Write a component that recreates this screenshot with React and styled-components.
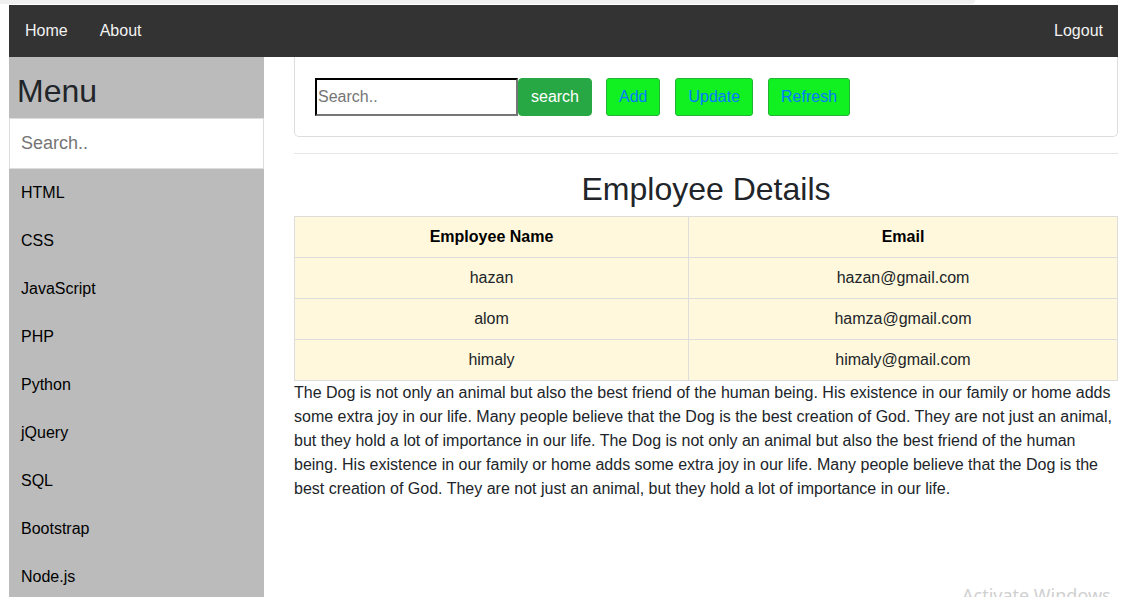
import React from 'react'
import styled, { createGlobalStyle } from 'styled-components'

const GlobalStyle = createGlobalStyle`
  html, body {
    margin: 0;
    padding: 0;
    background: #fff;
    font-family: "Liberation Sans", Arial, sans-serif;
    color: #212529;
    overflow: hidden;
  }
  * { box-sizing: border-box; }
`

const menuItems = ['HTML', 'CSS', 'JavaScript', 'PHP', 'Python', 'jQuery', 'SQL', 'Bootstrap', 'Node.js']

const employees = [
  { name: 'hazan', email: 'hazan@gmail.com' },
  { name: 'alom', email: 'hamza@gmail.com' },
  { name: 'himaly', email: 'himaly@gmail.com' },
]

const dogText =
  'The Dog is not only an animal but also the best friend of the human being. His existence in our family or home adds some extra joy in our life. Many people believe that the Dog is the best creation of God. They are not just an animal, but they hold a lot of importance in our life.'

export default function App() {
  return (
    <>
      <GlobalStyle />
      <Chrome />
      <Page>
        <TopNav>
          <NavLink>Home</NavLink>
          <NavLink>About</NavLink>
          <NavSpacer />
          <NavLink>Logout</NavLink>
        </TopNav>
        <Body>
          <Sidebar>
            <MenuTitle>Menu</MenuTitle>
            <MenuSearch placeholder="Search.." />
            <MenuList>
              {menuItems.map((item) => (
                <MenuItem key={item}>{item}</MenuItem>
              ))}
            </MenuList>
          </Sidebar>
          <Main>
            <ToolCard>
              <SearchInput placeholder="Search.." />
              <SearchButton>search</SearchButton>
              <ActionButton>Add</ActionButton>
              <ActionButton>Update</ActionButton>
              <ActionButton>Refresh</ActionButton>
            </ToolCard>
            <Divider />
            <Title>Employee Details</Title>
            <Table>
              <thead>
                <tr>
                  <Th style={{ width: 394 }}>Employee Name</Th>
                  <Th>Email</Th>
                </tr>
              </thead>
              <tbody>
                {employees.map((e) => (
                  <tr key={e.name}>
                    <Td>{e.name}</Td>
                    <Td>{e.email}</Td>
                  </tr>
                ))}
              </tbody>
            </Table>
            <Paragraph>
              {dogText} {dogText}
            </Paragraph>
          </Main>
        </Body>
      </Page>
      <Watermark>Activate Windows</Watermark>
    </>
  )
}

const Chrome = styled.div`
  height: 5px;
  width: 975px;
  background: #f0f0f0;
  border-bottom: 1px solid #fff;
  border-bottom-right-radius: 4px;
`

const Page = styled.div`
  margin-left: 9px;
  width: 1109px;
`

const TopNav = styled.nav`
  display: flex;
  align-items: center;
  height: 52px;
  background: #333;
`

const NavLink = styled.a`
  color: #f2f2f2;
  font-size: 16px;
  padding: 14px 16px;
  cursor: pointer;
  &:last-child {
    padding-right: 15px;
  }
`

const NavSpacer = styled.div`
  flex: 1;
`

const Body = styled.div`
  display: flex;
  gap: 30px;
  height: 540px;
`

const Sidebar = styled.aside`
  width: 255px;
  flex-shrink: 0;
  background: #bbb;
  display: flex;
  flex-direction: column;
  overflow: hidden;
`

const MenuTitle = styled.h2`
  margin: 0;
  flex-shrink: 0;
  height: 61px;
  padding: 17px 0 0 8px;
  font-size: 32px;
  font-weight: 400;
  line-height: 1.1;
  color: #212529;
`

const MenuSearch = styled.input`
  flex-shrink: 0;
  height: 51px;
  width: 255px;
  border: 1px solid #ddd;
  padding: 0 11px;
  font-size: 18px;
  font-family: "Liberation Sans", Arial, sans-serif;
  outline: none;
  &::placeholder {
    color: #757575;
  }
`

const MenuList = styled.ul`
  list-style: none;
  margin: 0;
  padding: 0;
  flex-shrink: 0;
`

const MenuItem = styled.li`
  height: 48px;
  display: flex;
  align-items: center;
  padding-left: 12px;
  font-size: 16px;
  color: #000;
`

const Main = styled.main`
  flex: 1;
  min-width: 0;
`

const ToolCard = styled.div`
  display: flex;
  align-items: center;
  height: 80px;
  padding: 0 20px;
  border: 1px solid #ddd;
  border-top: none;
  border-radius: 0 0 5px 5px;
`

const SearchInput = styled.input`
  width: 203px;
  height: 38px;
  border: 2px inset #767676;
  border-top-color: #222;
  border-left-color: #222;
  padding: 0 1px;
  font-size: 16px;
  font-family: "Liberation Sans", Arial, sans-serif;
  outline: none;
  &::placeholder {
    color: #757575;
  }
`

const SearchButton = styled.button`
  height: 38px;
  width: 74px;
  margin-right: 14px;
  background: #28a745;
  color: #fff;
  border: 1px solid #28a745;
  border-radius: 4px;
  font-size: 16px;
  font-family: "Liberation Sans", Arial, sans-serif;
`

const ActionButton = styled.button`
  height: 38px;
  padding: 0 12px;
  margin-right: 15px;
  background: #11f122;
  color: #007bff;
  border: 1px solid #23b233;
  border-radius: 3px;
  font-size: 16px;
  font-family: "Liberation Sans", Arial, sans-serif;
`

const Divider = styled.hr`
  margin: 16px 0 16px;
  border: 0;
  border-top: 1px solid #e6e6e6;
`

const Title = styled.h2`
  margin: 0 0 8px;
  text-align: center;
  font-size: 32px;
  font-weight: 400;
  line-height: 38px;
`

const Table = styled.table`
  width: 100%;
  border-collapse: collapse;
  background: #fff8dc;
  font-size: 16px;
`

const Th = styled.th`
  height: 41px;
  border: 1px solid #ddd;
  font-weight: 700;
  color: #000;
`

const Td = styled.td`
  height: 41px;
  border: 1px solid #ddd;
  text-align: center;
  color: #212529;
`

const Paragraph = styled.p`
  margin: 0;
  font-size: 16px;
  line-height: 24px;
  color: #212529;
`

const Watermark = styled.div`
  position: absolute;
  left: 962px;
  top: 583px;
  font-family: "Noto Sans", sans-serif;
  font-size: 18px;
  color: #d0d0d0;
  pointer-events: none;
`
